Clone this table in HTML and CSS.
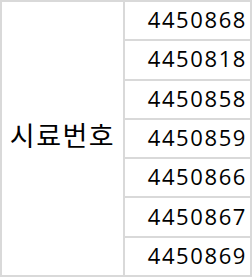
FILE: index.html
```html
<!DOCTYPE html>
<html lang="ko">
<head>
<meta charset="utf-8">
<link rel="stylesheet" href="styles.css">
</head>
<body>
<div class="table">
  <div class="label">시료번호</div>
  <div class="num">4450868</div>
  <div class="num">4450818</div>
  <div class="num">4450858</div>
  <div class="num">4450859</div>
  <div class="num">4450866</div>
  <div class="num">4450867</div>
  <div class="num">4450869</div>
</div>
</body>
</html>
```
FILE: styles.css
```css
html, body {
  margin: 0;
  padding: 0;
  background: #ffffff;
}
.table {
  box-sizing: border-box;
  width: 252px;
  height: 277px;
  display: grid;
  grid-template-columns: 123px 1fr;
  grid-template-rows: repeat(7, 1fr);
  border-top: 2px solid #d9d9d9;
  border-left: 2px solid #d9d9d9;
  font-family: "Open Sans", "Noto Sans CJK KR", sans-serif;
  color: #000;
}
.label {
  grid-row: 1 / span 7;
  grid-column: 1;
  display: flex;
  align-items: center;
  justify-content: center;
  padding-bottom: 8px;
  border-right: 2px solid #d9d9d9;
  border-bottom: 2px solid #d9d9d9;
  font-family: "Noto Sans CJK KR", sans-serif;
  font-size: 27px;
  letter-spacing: 1.5px;
}
.num {
  grid-column: 2;
  display: flex;
  align-items: center;
  justify-content: flex-end;
  padding-right: 3px;
  padding-bottom: 3px;
  border-right: 2px solid #d9d9d9;
  border-bottom: 2px solid #d9d9d9;
  font-size: 22px;
  letter-spacing: 1.6px;
}
```
